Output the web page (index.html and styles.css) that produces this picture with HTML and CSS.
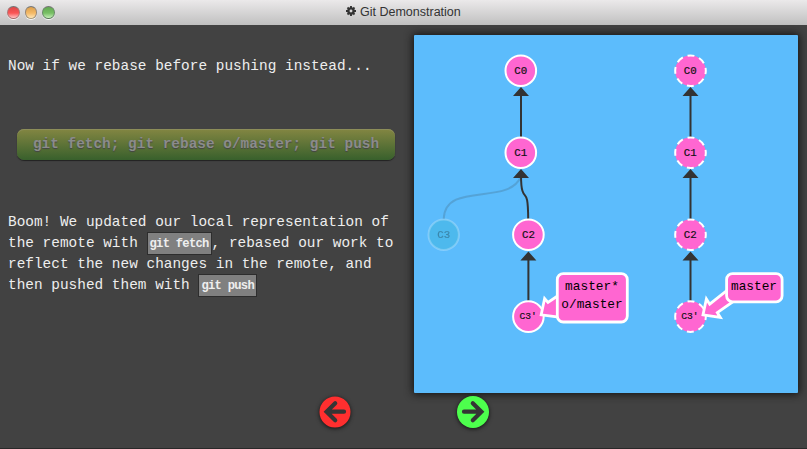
FILE: index.html
```html
<!DOCTYPE html>
<html lang="en">
<head>
<meta charset="utf-8">
<title>Git Demonstration</title>
<link rel="stylesheet" href="styles.css">
</head>
<body>
<div class="window">
  <header class="titlebar">
    <div class="lights"><i class="light red"></i><i class="light amber"></i><i class="light green"></i></div>
    <svg class="cog" viewBox="0 0 10 10"><circle cx="5" cy="5" r="2.6" fill="none" stroke="#333" stroke-width="2.3"/><path d="M5 0v2.5M5 7.5V10M0 5h2.5M7.5 5H10M1.5 1.5l1.8 1.8M6.7 6.7l1.8 1.8M1.5 8.5l1.8-1.8M6.7 3.3l1.8-1.8" stroke="#333" stroke-width="1.9"/></svg>
    <span class="title">Git Demonstration</span>
  </header>
  <main class="content">
    <section class="copy">
      <p>Now if we rebase before pushing instead...</p>
      <div class="command">git fetch; git rebase o/master; git push</div>
      <p>Boom! We updated our local representation of<br>the remote with <code>git fetch</code>, rebased our work to<br>reflect the new changes in the remote, and<br>then pushed them with <code>git push</code></p>
    </section>
    <svg class="tree" viewBox="414 35 384 358">
      <g class="ghost">
        <path class="edge" d="M443.7 219C445 181 508 206 520.7 177"/>
        <circle class="node" cx="443.7" cy="234.7" r="15.2"/>
        <text class="id" x="443.7" y="238">C3</text>
      </g>
      <path class="edge" d="M521 137V93M528.2 219C528 190 525 199 522.5 191C521 187 521 183 521 174M528.4 301V258M690.5 137V93M690.5 219V175M690.5 301V258"/>
      <path class="head" d="M521 87l8 9h-16zM521 169l8 9h-16zM528.4 251.5l8 9h-16zM690.5 87l8 9h-16zM690.5 169l8 9h-16zM690.5 251.5l8 9h-16z"/>
      <g class="node">
        <circle cx="520.8" cy="70.7" r="15.3"/>
        <circle cx="520.8" cy="152.7" r="15.3"/>
        <circle cx="528.4" cy="234.7" r="15.3"/>
        <circle cx="528.4" cy="316.6" r="15.3"/>
      </g>
      <g class="node remote">
        <circle cx="690.5" cy="70.7" r="15.3"/>
        <circle cx="690.5" cy="152.7" r="15.3"/>
        <circle cx="690.5" cy="234.7" r="15.3"/>
        <circle cx="690.5" cy="316.6" r="15.3"/>
      </g>
      <g class="id">
        <text x="520.8" y="74">C0</text><text x="520.8" y="156">C1</text><text x="528.4" y="238">C2</text><text class="small" x="528.2" y="319.4">C3'</text>
        <text x="690.2" y="74">C0</text><text x="690.2" y="156">C1</text><text x="690.2" y="238">C2</text><text class="small" x="690" y="319.4">C3'</text>
      </g>
      <path class="tag" d="M541.2 314.8L544.6 298.5L548 302.5L562 293V317.5L555 316.6Z"/>
      <rect class="tag" x="557.3" y="273.6" width="70" height="48.4" rx="6"/>
      <text class="branch" x="592" y="290">master*</text>
      <text class="branch" x="592" y="308">o/master</text>
      <path class="tag" d="M703 314.8L706.4 299L709.7 304.2L727 290.5L735.5 300L717.3 312.6L720.3 317.5Z"/>
      <rect class="tag" x="726.6" y="273.6" width="55.5" height="28.2" rx="6"/>
      <text class="branch" x="754" y="290">master</text>
    </svg>
  </main>
  <nav class="controls">
    <svg class="nav" viewBox="0 0 32 32"><circle cx="16" cy="16" r="15.5" fill="#ff2f2f"/><path d="M25 15.7H8M16.2 7.2L7.6 15.7l8.6 8.5"/></svg>
    <svg class="nav" viewBox="0 0 32 32"><circle cx="16" cy="16" r="16" fill="#4dff4d"/><path d="M7 15.7H24M15.8 7.2l8.6 8.5l-8.6 8.5"/></svg>
  </nav>
</div>
</body>
</html>
```
FILE: styles.css
```css
* { box-sizing: border-box; }
body { margin: 0; background: #424242; }
.window {
  width: 807px; height: 449px; overflow: hidden;
  background: #424242; border-bottom: 1px solid #292929;
  display: flex; flex-direction: column;
}
.titlebar {
  height: 25px; flex: none; display: flex; align-items: center;
  background: linear-gradient(#ebe9ea, #c0c0c0);
  color: #333; font: 12.5px/24px "Liberation Sans", Arial, sans-serif;
}
.lights { width: 346px; padding-left: 7px; display: flex; gap: 5px; }
.light {
  width: 12.5px; height: 13px; margin-top: -1px; border-radius: 50%;
  border: 1.5px solid; box-shadow: 0 1px 0 #f5f5f5;
}
.red { border-color: #777 #a77 #a66; background: linear-gradient(#dc4748, #fa5555 55%, #ffc4c4); }
.amber { border-color: #777 #987 #a97; background: linear-gradient(#dda04d, #f4b966 55%, #ffe6b8); }
.green { border-color: #777 #686 #575; background: linear-gradient(#63a852, #77bf64 55%, #c4efb7); }
.cog { width: 10px; height: 10px; margin-top: -3px; }
.title { margin: -2px 0 0 4px; white-space: nowrap; }
.content { display: flex; height: 368px; flex: none; }
.copy {
  width: 414px; padding: 31px 0 0 8px;
  font: 14.4px/21px "Courier New", "Liberation Mono", monospace; letter-spacing: .02px; color: #eee;
}
p { margin: 0; white-space: nowrap; }
.command {
  width: 378px; height: 31px; margin: 52px 0 52px 9px; border-radius: 7px;
  background: linear-gradient(#838642, #38602c);
  box-shadow: inset 0 1px 0 #8c8d59, 0 1px 1px #222;
  color: #8b8b8b; font-weight: bold; line-height: 31px; text-align: center;
  text-shadow: 0 1px 1px #444; white-space: nowrap;
}
code {
  display: inline-block; height: 23px; margin: -1px 0; padding: 0 2px;
  border: 1px solid #2d2d2d; background: #808080; color: #eee;
  font: bold 12.2px/22px "Liberation Mono", monospace; letter-spacing: -.75px; vertical-align: middle;
}
.tree {
  width: 384px; height: 358px; margin-top: 10px; flex: none;
  background: #5cbcfc; border-radius: 1px; box-shadow: 0 0 9px 1px #111;
}
.edge { fill: none; stroke: #333; stroke-width: 2; }
.head { fill: #333; }
.node { fill: #ff66d1; stroke: #fff; stroke-width: 2; }
.remote { stroke-dasharray: 7 5.02; stroke-dashoffset: 3.5; }
.id { font: 10.8px "Liberation Mono", monospace; text-anchor: middle; fill: #111; stroke: #111; stroke-width: .2; }
.id .small { font-size: 9.6px; }
.ghost .edge { opacity: .18; }
.ghost .node { fill: #35b5d5; fill-opacity: .38; stroke-opacity: .25; }
.ghost .id { opacity: .3; }
.tag { fill: #ff66d1; stroke: #fff; stroke-width: 2.8; }
.branch { font: 12.8px "Courier New", "Liberation Mono", monospace; text-anchor: middle; fill: #000; }
.controls { display: flex; gap: 106px; padding: 2.5px 0 0 318.5px; }
.nav { width: 32px; height: 32px; overflow: visible; filter: drop-shadow(0 1px 2px #111); }
.nav path { fill: none; stroke: #353535; stroke-width: 4.2; stroke-linecap: round; stroke-linejoin: miter; }
```
